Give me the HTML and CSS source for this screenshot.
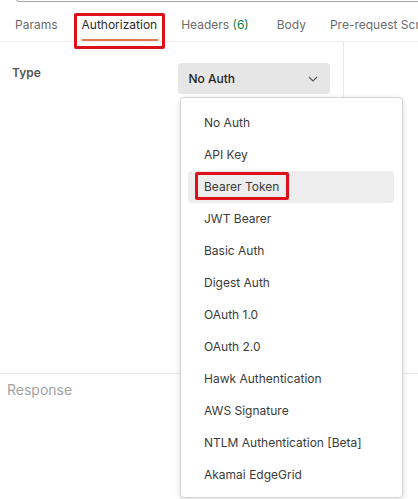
FILE: index.html
```html
<!DOCTYPE html>
<html>
<head>
<meta charset="utf-8">
<link rel="stylesheet" href="styles.css">
</head>
<body>
<div class="page">
  <div class="url-box"></div>
  <nav class="tabs">
    <span class="tab">Params</span>
    <span class="tab active">Authorization<span class="mark mark-tab"></span></span>
    <span class="tab tab-headers">Headers <span class="count">(6)</span></span>
    <span class="tab">Body</span>
    <span class="tab">Pre-request Script</span>
  </nav>
  <div class="editor">
    <div class="left">
      <div class="type-row">
        <span class="type-label">Type</span>
        <div class="select">
          <span>No Auth</span>
          <svg class="chev" width="10" height="6" viewBox="0 0 10 6"><path d="M1 1l4 4 4-4" fill="none" stroke="#555" stroke-width="1.1"/></svg>
        </div>
      </div>
    </div>
    <div class="right"></div>
  </div>
  <div class="response">Response</div>

  <ul class="menu">
    <li class="item">No Auth</li>
    <li class="item">API Key</li>
    <li class="item hover"><span class="label">Bearer Token<span class="mark mark-item"></span></span></li>
    <li class="item">JWT Bearer</li>
    <li class="item">Basic Auth</li>
    <li class="item">Digest Auth</li>
    <li class="item">OAuth 1.0</li>
    <li class="item">OAuth 2.0</li>
    <li class="item">Hawk Authentication</li>
    <li class="item">AWS Signature</li>
    <li class="item">NTLM Authentication [Beta]</li>
    <li class="item">Akamai EdgeGrid</li>
  </ul>
</div>
</body>
</html>
```
FILE: styles.css
```css
* { box-sizing: border-box; }
html, body { margin: 0; padding: 0; background: #fff; }
body {
  font-family: Inter, "Noto Sans", sans-serif;
  font-size: 12px;
  color: #212121;
  width: 418px;
  height: 499px;
  overflow: hidden;
}
.page { position: relative; height: 499px; overflow: hidden; }

.url-box {
  height: 3px;
  margin-left: 16px;
  border-left: 1px solid #a8a8a8;
  border-bottom: 1px solid #a8a8a8;
  border-bottom-left-radius: 4px;
  margin-top: -1px;
}

.tabs {
  display: flex;
  height: 40px;
  border-bottom: 1px solid #ececec;
  padding-left: 3px;
  white-space: nowrap;
}
.tab {
  position: relative;
  padding: 15px 12px 0;
  line-height: 16px;
  color: #6b6b6b;
  flex: none;
}
.tab-headers { padding-right: 16px; }
.tab.active { color: #2b2b2b; }
.tab.active::after {
  content: "";
  position: absolute;
  left: 12px; right: 11px;
  bottom: 0;
  height: 2px;
  background: #e07a52;
}
.count { color: #0c7b3e; }

.mark {
  position: absolute;
  border: 3px solid #e0101b;
  border-radius: 2px;
  pointer-events: none;
}
.mark-tab { left: 4px; right: 4px; top: 11px; bottom: -8px; }

.editor {
  display: flex;
  height: 332px;
  border-bottom: 1px solid #e8e8e8;
}
.left {
  width: 344px;
  border-right: 1px solid #e8e8e8;
  padding: 21px 13px 0 12px;
}
.right { flex: 1; }

.type-row {
  display: flex;
  align-items: flex-start;
}
.type-label {
  width: 167px;
  font-weight: 600;
  color: #555;
  line-height: 20px;
}
.select {
  width: 152px;
  height: 31px;
  background: #e6e6e6;
  border-radius: 4px;
  display: flex;
  align-items: center;
  justify-content: space-between;
  padding: 0 12px 0 10px;
  font-weight: 500;
  color: #1f1f1f;
}
.chev { margin-top: 1px; }

.response {
  padding: 7px 0 0 7px;
  font-size: 14px;
  color: #a3a3a3;
}

.menu {
  position: absolute;
  left: 180px;
  top: 97px;
  width: 223px;
  height: 401px;
  margin: 0;
  list-style: none;
  background: #fff;
  border: 1px solid #d6d6d6;
  border-radius: 4px;
  box-shadow: 0 2px 6px rgba(0,0,0,0.15);
  padding: 9px 8px 0 7px;
}
.item {
  height: 32px;
  line-height: 32px;
  padding-left: 16px;
  color: #3b3b3b;
  border-radius: 4px;
}
.item.hover { background: #ededed; }
.label { position: relative; display: inline-block; }
.mark-item { left: -9px; right: -10px; top: 1px; bottom: 3px; }
```
